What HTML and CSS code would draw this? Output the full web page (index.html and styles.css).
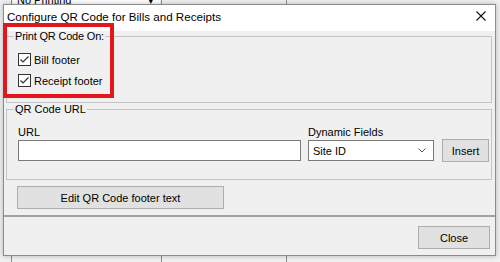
FILE: index.html
```html
<!DOCTYPE html>
<html lang="en">
<head>
  <meta charset="UTF-8">
  <meta name="viewport" content="width=device-width, initial-scale=1.0">
  <title>Configure QR Code for Bills and Receipts</title>
  <link rel="stylesheet" href="styles.css">
</head>
<body>
  <div class="desk">
    <div class="col col-a"></div>
    <div class="col col-b">
      <div class="combo-behind">No Printing<span class="arrow-behind">&#9662;</span></div>
    </div>
    <div class="col col-c"></div>
    <div class="col col-d"></div>
  </div>

  <div class="dialog">
    <div class="titlebar">
      <span class="title">Configure QR Code for Bills and Receipts</span>
      <svg class="close-x" width="10" height="10" viewBox="0 0 10 10">
        <path d="M0.5 0.5 L9.5 9.5 M9.5 0.5 L0.5 9.5" stroke="#111" stroke-width="1.1" fill="none"/>
      </svg>
    </div>

    <div class="dialog-body">
      <fieldset class="group group-print">
        <legend>Print QR Code On:</legend>
        <label class="check">
          <span class="box">
            <svg width="11" height="11" viewBox="0 0 11 11"><path d="M1.5 5.5 L4 8 L9.5 2.5" stroke="#333" stroke-width="1.2" fill="none"/></svg>
          </span>
          Bill footer
        </label>
        <label class="check">
          <span class="box">
            <svg width="11" height="11" viewBox="0 0 11 11"><path d="M1.5 5.5 L4 8 L9.5 2.5" stroke="#333" stroke-width="1.2" fill="none"/></svg>
          </span>
          Receipt footer
        </label>
      </fieldset>

      <fieldset class="group group-url">
        <legend>QR Code URL</legend>
        <div class="url-row">
          <div class="field field-url">
            <span class="field-label">URL</span>
            <div class="textbox"></div>
          </div>
          <div class="field field-dyn">
            <span class="field-label">Dynamic Fields</span>
            <div class="select">
              Site ID
              <svg class="chev" width="8" height="5" viewBox="0 0 8 5"><path d="M0.5 0.5 L4 4 L7.5 0.5" stroke="#555" stroke-width="1" fill="none"/></svg>
            </div>
          </div>
          <button class="btn btn-insert">Insert</button>
        </div>
      </fieldset>

      <button class="btn btn-edit">Edit QR Code footer text</button>
    </div>

    <div class="dialog-footer">
      <button class="btn btn-close">Close</button>
    </div>
  </div>

  <div class="highlight"></div>
</body>
</html>
```

FILE: styles.css
```css
body {
  margin: 0;
  width: 500px;
  height: 262px;
  overflow: hidden;
  position: relative;
  background-color: #f0f0f0;
  font-family: 'Liberation Sans', Arial, sans-serif;
  font-size: 11px;
  color: #000;
}

/* the app window behind the dialog */
.desk {
  display: flex;
  height: 262px;
}

.col {
  height: 100%;
  border-right: 1px solid #8a8a8a;
}

.col-a {
  width: 11px;
}

.col-b {
  width: 149px;
}

.col-c {
  width: 124px;
}

.col-d {
  flex: 1;
  border-right: none;
}

.combo-behind {
  position: relative;
  height: 5px;
  margin: 0 1px 0 1px;
  background-color: #fff;
  border-bottom: 1px solid #a0a0a0;
  line-height: 0;
  padding-left: 4px;
  font-size: 11px;
  overflow: hidden;
}

.arrow-behind {
  position: absolute;
  right: 6px;
  top: 0;
}

/* dialog window */
.dialog {
  position: absolute;
  left: 3px;
  top: 4px;
  width: 493px;
  height: 252px;
  box-sizing: border-box;
  border: 1px solid #8c8c8c;
  background-color: #f0f0f0;
  box-shadow: 0 0 5px rgba(0, 0, 0, 0.25);
  display: flex;
  flex-direction: column;
}

.titlebar {
  height: 26px;
  box-sizing: border-box;
  background-color: #fff;
  display: flex;
  align-items: center;
  justify-content: space-between;
  padding: 0 9px 4px 3px;
}

.title {
  font-size: 11.6px;
  color: #000;
}

.dialog-body {
  flex: 1;
  padding: 0 3px 0 2px;
}

.group {
  margin: 0;
  padding: 0 0 0 11px;
  border: 1px solid #c4c4c4;
  box-sizing: border-box;
}

.group legend {
  padding: 0 1px;
  margin-left: -4px;
  line-height: 11px;
  color: #000;
}

.group-print legend {
  letter-spacing: -0.2px;
}

.group-print {
  height: 72px;
  padding-top: 7px;
}

.check {
  display: flex;
  align-items: center;
  height: 21px;
  gap: 3px;
}

.box {
  width: 13px;
  height: 13px;
  box-sizing: border-box;
  border: 1px solid #333;
  background-color: #fff;
  display: flex;
  align-items: center;
  justify-content: center;
}

.group-url {
  margin-top: 1px;
  height: 76px;
  padding-top: 11px;
}

.url-row {
  display: flex;
  align-items: flex-end;
}

.field {
  display: flex;
  flex-direction: column;
}

.field-label {
  line-height: 13px;
  margin-bottom: 1px;
}

.textbox {
  width: 283px;
  height: 21px;
  box-sizing: border-box;
  border: 1px solid #7a7a7a;
  background-color: #fff;
}

.field-dyn {
  margin-left: 7px;
}

.select {
  width: 126px;
  height: 21px;
  box-sizing: border-box;
  border: 1px solid #7a7a7a;
  background-color: #fff;
  display: flex;
  align-items: center;
  justify-content: space-between;
  padding: 0 7px 0 4px;
}

.btn {
  font-family: 'Liberation Sans', Arial, sans-serif;
  font-size: 11px;
  color: #000;
  background-color: #e1e1e1;
  border: 1px solid #adadad;
  height: 23px;
  box-sizing: border-box;
  padding: 0;
}

.btn-insert {
  width: 47px;
  margin-left: 8px;
  margin-bottom: -1px;
}

.btn-edit {
  width: 207px;
  margin: 6px 0 0 11px;
}

.dialog-footer {
  height: 40px;
  box-sizing: border-box;
  border-top: 2px solid #a0a0a0;
  display: flex;
  justify-content: flex-end;
  padding: 9px 5px 0 0;
}

.btn-close {
  width: 72px;
}

/* red annotation box */
.highlight {
  position: absolute;
  left: 3px;
  top: 23px;
  width: 111px;
  height: 75px;
  box-sizing: border-box;
  border: 4px solid #e3151d;
}
```
